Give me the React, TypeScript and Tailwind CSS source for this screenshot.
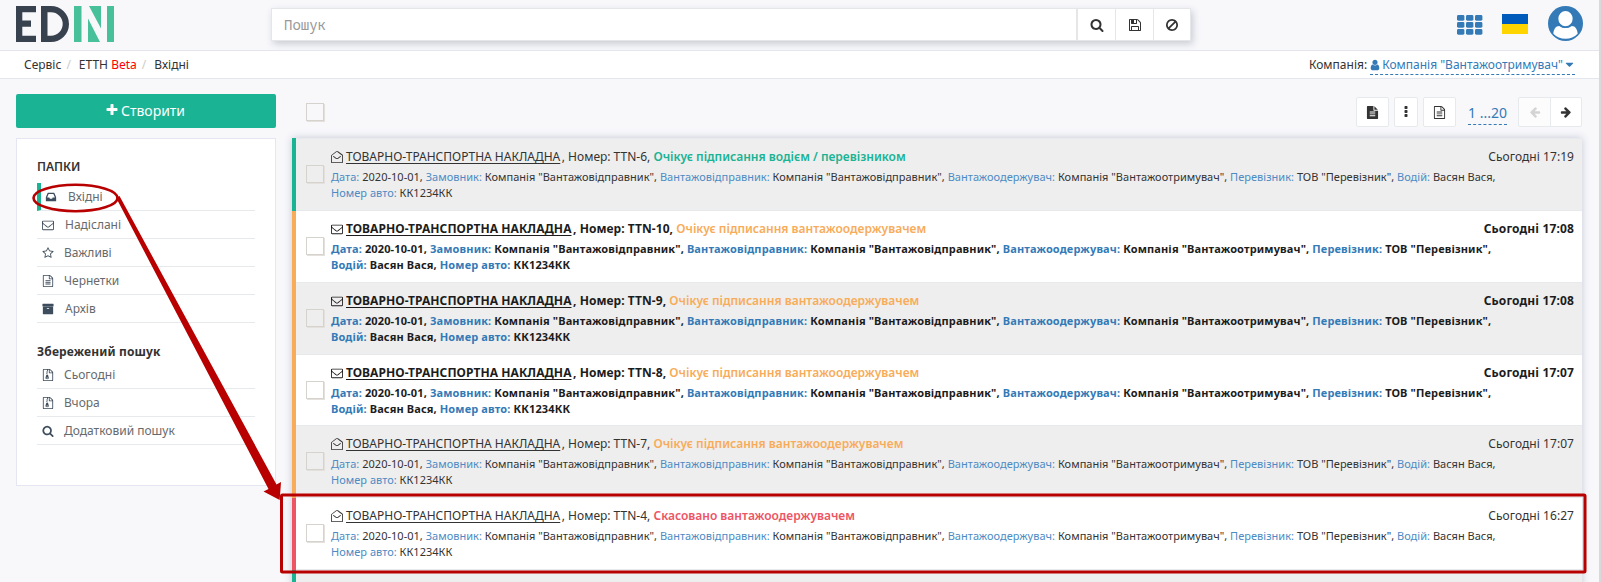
import React from "react";

const P = {
  search:
    "M1216 832q0-185-131.5-316.5t-316.5-131.5-316.5 131.5-131.5 316.5 131.5 316.5 316.5 131.5 316.5-131.5 131.5-316.5zm512 832q0 52-38 90t-90 38q-54 0-90-38l-343-342q-179 124-399 124-143 0-273.5-55.5t-225-150-150-225-55.5-273.5 55.5-273.5 150-225 225-150 273.5-55.5 273.5 55.5 225 150 150 225 55.5 273.5q0 220-124 399l343 343q37 37 37 90z",
  ban: "M1440 893q0-161-87-295l-754 753q137 89 297 89 111 0 211.5-43.5t173.5-116.5 116-174.5 43-212.5zm-999 299l755-754q-135-91-300-91-148 0-273 73t-198 199-73 274q0 162 89 299zm1223-299q0 157-61 300t-163.5 246-245 164-298.5 61-298.5-61-245-164-163.5-246-61-300 61-299.5 163.5-245.5 245-164 298.5-61 298.5 61 245 164 163.5 245.5 61 299.5z",
  floppy:
    "M512 1536h768v-384h-768v384zm896 0h128v-896q0-14-10-38.5t-20-34.5l-281-281q-10-10-34-20t-39-10v416q0 40-28 68t-68 28h-576q-40 0-68-28t-28-68v-416h-128v1280h128v-416q0-40 28-68t68-28h832q40 0 68 28t28 68v416zm-384-928v-320q0-13-9.5-22.5t-22.5-9.5h-192q-13 0-22.5 9.5t-9.5 22.5v320q0 13 9.5 22.5t22.5 9.5h192q13 0 22.5-9.5t9.5-22.5zm640 32v928q0 40-28 68t-68 28h-1344q-40 0-68-28t-28-68v-1344q0-40 28-68t68-28h928q40 0 88 20t76 48l280 280q28 28 48 76t20 88z",
  fileO:
    "M1596 380q28 28 48 76t20 88v1152q0 40-28 68t-68 28h-1344q-40 0-68-28t-28-68v-1600q0-40 28-68t68-28h896q40 0 88 20t76 48zm-444-244v376h376q-10-29-22-41l-313-313q-12-12-41-22zm384 1528v-1024h-416q-40 0-68-28t-28-68v-416h-768v1536h1280zm-1024-864q0-14 9-23t23-9h704q14 0 23 9t9 23v64q0 14-9 23t-23 9h-704q-14 0-23-9t-9-23v-64zm736 224q14 0 23 9t9 23v64q0 14-9 23t-23 9h-704q-14 0-23-9t-9-23v-64q0-14 9-23t23-9h704zm0 256q14 0 23 9t9 23v64q0 14-9 23t-23 9h-704q-14 0-23-9t-9-23v-64q0-14 9-23t23-9h704z",
  file: "M1596 476q14 14 28 36h-472v-472q22 14 36 28zm-476 164h544v1056q0 40-28 68t-68 28h-1344q-40 0-68-28t-28-68v-1600q0-40 28-68t68-28h800v544q0 40 28 68t68 28zm160 736v-64q0-14-9-23t-23-9h-704q-14 0-23 9t-9 23v64q0 14 9 23t23 9h704q14 0 23-9t9-23zm0-256v-64q0-14-9-23t-23-9h-704q-14 0-23 9t-9 23v64q0 14 9 23t23 9h704q14 0 23-9t9-23zm0-256v-64q0-14-9-23t-23-9h-704q-14 0-23 9t-9 23v64q0 14 9 23t23 9h704q14 0 23-9t9-23z",
  zip: "M1596 380q28 28 48 76t20 88v1152q0 40-28 68t-68 28h-1344q-40 0-68-28t-28-68v-1600q0-40 28-68t68-28h896q40 0 88 20t76 48zm-444-244v376h376q-10-29-22-41l-313-313q-12-12-41-22zm384 1528v-1024h-416q-40 0-68-28t-28-68v-416h-128v128h-128v-128h-512v1536h1280zM768 256v128h128v-128zm-128 128v128h128v-128zm128 128v128h128v-128zm-128 128v128h128v-128zm128 128v128h-128l-110 360q-14 50-14 72 0 90 72 141t180 51 180-51 72-141q0-22-14-72l-88-314q-5-18-19-32t-35-14h-32v-128zm0 512q53 0 90.500 19t37.500 45-37.500 45-90.500 19-90.500-19-37.500-45 37.500-45 90.500-19z",
  plus: "M1600 736v192q0 40-28 68t-68 28h-416v416q0 40-28 68t-68 28h-192q-40 0-68-28t-28-68v-416h-416q-40 0-68-28t-28-68v-192q0-40 28-68t68-28h416v-416q0-40 28-68t68-28h192q40 0 68 28t28 68v416h416q40 0 68 28t28 68z",
  envelope:
    "M1664 1504v-768q-32 36-69 66-268 206-426 338-51 43-83 67t-86.500 48.500-102.500 24.500h-2q-48 0-102.500-24.500t-86.500-48.500-83-67q-158-132-426-338-37-30-69-66v768q0 13 9.500 22.500t22.500 9.500h1472q13 0 22.500-9.500t9.500-22.500zm0-1051v-24.500l-.5-13-3-12.500-5.500-9-9-7.500-14-2.500h-1472q-13 0-22.500 9.500t-9.500 22.500q0 168 147 284 193 152 401 317 6 5 35 29.500t46 37.500 44.500 31.500 50.500 27.500 43 9h2q20 0 43-9t50.500-27.500 44.500-31.500 46-37.500 35-29.500q208-165 401-317 54-43 100.500-115.500t46.500-131.500zm128-37v1088q0 66-47 113t-113 47h-1472q-66 0-113-47t-47-113v-1088q0-66 47-113t113-47h1472q66 0 113 47t47 113z",
  envelopeOpen:
    "M160 1792q-66 0-113-47t-47-113v-932q0-53 43-84q95-78 505-390q42-32 76-59q67-52 122-85t105-42q45-9 45-9q45 0 95 9t105 42q55 33 122 85q34 27 76 59q410 312 452 344q46 36 46 90v972q0 66-47 113t-113 47zm0-128h1472q13 0 22.500-9.500t9.500-22.500v-930q0-14-12-24q-90-72-472-360q-46-36-82-66q-54-44-94-70t-72-34q-36-8-36-8q-36 0-68 14t-72 40q-40 26-94 70q-36 30-82 66q-382 288-440 344q-12 10-12 28v930q0 13 9.500 22.500t22.500 9.500zM298 838l60-72q10-12 24-12t26 8q160 122 240 188q52 42 92 68t66 36q54 22 90 22q48 0 90-22q26-10 66-36t92-68q80-66 240-188q12-8 26-8t24 12l44 56q14 20-8 40q-178 140-254 198q-50 40-94 68t-82 44q-78 34-144 34q-76 0-144-34q-38-16-82-44t-94-68q-76-58-260-198q-22-12-18-24z",
  inbox:
    "M1151 960h316q-1-3-2.500-8.500t-2.500-7.500l-212-496h-708l-212 496q-1 3-2.500 8.500t-2.500 7.500h316l95 192h320zm513 30v482q0 26-19 45t-45 19h-1408q-26 0-45-19t-19-45v-482q0-62 25-123l238-552q10-25 36.500-42t52.500-17h832q26 0 52.500 17t36.500 42l238 552q25 61 25 123z",
  star: "M1201 1004l306-297-422-62-189-382-189 382-422 62 306 297-73 421 378-199 377 199zm527-357q0 22-26 48l-363 354 86 500q1 7 1 20 0 50-41 50-19 0-40-12l-449-236-449 236q-22 12-40 12-21 0-31.500-14.500t-10.500-35.500q0-6 2-20l86-500-364-354q-25-27-25-48 0-37 56-46l502-73 225-455q19-41 49-41t49 41l225 455 502 73q56 9 56 46z",
  archive:
    "M1088 832q0-26-19-45t-45-19h-256q-26 0-45 19t-19 45 19 45 45 19h256q26 0 45-19t19-45zm576-192v960q0 26-19 45t-45 19h-1408q-26 0-45-19t-19-45v-960q0-26 19-45t45-19h1408q26 0 45 19t19 45zm64-448v256q0 26-19 45t-45 19h-1536q-26 0-45-19t-19-45v-256q0-26 19-45t45-19h1536q26 0 45 19t19 45z",
  arrow:
    "M1664 896v128q0 53-32.500 90.500t-84.500 37.500h-704l293 294q38 36 38 90t-38 90l-75 76q-37 37-90 37-52 0-91-37l-651-652q-37-37-37-90 0-52 37-91l651-650q38-38 91-38 52 0 90 38l75 74q38 38 38 91t-38 91l-293 293h704q52 0 84.500 37.500t32.500 90.500z",
  user: "M1536 1399q0 109-62.500 187t-150.500 78h-854q-88 0-150.500-78t-62.500-187q0-85 8.500-160.500t31.500-152 58.500-131 94-89 134.500-34.500q131 128 313 128t313-128q76 0 134.500 34.500t94 89 58.500 131 31.500 152 8.500 160.500zm-256-887q0 159-112.500 271.500t-271.500 112.500-271.500-112.500-112.500-271.500 112.500-271.500 271.500-112.500 271.500 112.500 112.500 271.500z",
  dots: "M1088 1248v192q0 40-28 68t-68 28h-192q-40 0-68-28t-28-68v-192q0-40 28-68t68-28h192q40 0 68 28t28 68zm0-512v192q0 40-28 68t-68 28h-192q-40 0-68-28t-28-68v-192q0-40 28-68t68-28h192q40 0 68 28t28 68zm0-512v192q0 40-28 68t-68 28h-192q-40 0-68-28t-28-68v-192q0-40 28-68t68-28h192q40 0 68 28t28 68z",
  caret: "M1408 704q0 26-19 45l-448 448q-19 19-45 19t-45-19l-448-448q-19-19-19-45t19-45 45-19h896q26 0 45 19t19 45z",
};

function Icon({ name, className = "size-3.5" }: { name: keyof typeof P; className?: string }) {
  return (
    <svg viewBox="0 0 1792 1792" className={`shrink-0 fill-current ${className}`}>
      <path d={P[name]} />
    </svg>
  );
}

function Logo() {
  return (
    <svg viewBox="0 0 98 36" className="h-9 w-[98px]">
      <g fill="#38424e">
        <path d="M0 0h20v6.300H6.300v8.200H15v6.200H6.300v9H20V36H0z" />
        <path fillRule="evenodd" d="M25 0h10a18 18 0 0 1 0 36H25zM31.500 6.300v23.400H35a11.700 11.700 0 0 0 0-23.400z" />
      </g>
      <g fill="#48c09a">
        <path d="M58 0h7.500v36H58zM91 0h7v36h-7zM72 12.500 84 36H72zM73 0h12v22.500z" />
      </g>
    </svg>
  );
}

function Th() {
  return (
    <svg viewBox="0 0 26 20" className="h-5 w-[26px]" fill="#337ab7">
      {[0, 7, 14].map((y) => [0, 9, 18].map((x) => <rect key={`${x}-${y}`} x={x} y={y} width="7.400" height="5.700" rx="1.400" />))}
    </svg>
  );
}

function Avatar() {
  return (
    <svg viewBox="0 0 36 36" className="size-[35px]">
      <circle cx="18" cy="18" r="18" fill="#337ab7" />
      <path d="M5.500 28.500C5.700 24 8 20.500 11.500 20.500Q18 25 24.500 20.500C28 20.500 30.300 24 30.500 28.500Q25.500 33.700 18 33.700T5.500 28.500z" fill="#fff" />
      <ellipse cx="18" cy="13" rx="8.200" ry="8.700" fill="#fff" stroke="#337ab7" strokeWidth="1.700" />
    </svg>
  );
}

type Row = {
  no: string;
  status: string;
  time: string;
  bar: string;
  color: string;
  unread?: boolean;
  bg: string;
  height: string;
};

const WAIT = "Очікує підписання вантажоодержувачем";
const rows: Row[] = [
  { no: "6", status: "Очікує підписання водієм / перевізником", time: "17:19", bar: "bg-[#1ab394]", color: "text-[#1ab394]", bg: "bg-[#eee]", height: "h-[72px]" },
  { no: "10", status: WAIT, time: "17:08", bar: "bg-[#f8ac59]", color: "text-[#f8ac59]", unread: true, bg: "bg-white", height: "h-[72px]" },
  { no: "9", status: WAIT, time: "17:08", bar: "bg-[#f8ac59]", color: "text-[#f8ac59]", unread: true, bg: "bg-[#eee]", height: "h-[72px]" },
  { no: "8", status: WAIT, time: "17:07", bar: "bg-[#f8ac59]", color: "text-[#f8ac59]", unread: true, bg: "bg-white", height: "h-[71px]" },
  { no: "7", status: WAIT, time: "17:07", bar: "bg-[#f8ac59]", color: "text-[#f8ac59]", bg: "bg-[#eee]", height: "h-[72px]" },
  { no: "4", status: "Скасовано вантажоодержувачем", time: "16:27", bar: "bg-[#ed5565]", color: "text-[#ed5565]", bg: "bg-white", height: "h-[72px]" },
];

const fields: [string, string][] = [
  ["Дата", "2020-10-01"],
  ["Замовник", 'Компанія "Вантажовідправник"'],
  ["Вантажовідправник", 'Компанія "Вантажовідправник"'],
  ["Вантажоодержувач", 'Компанія "Вантажоотримувач"'],
  ["Перевізник", 'ТОВ "Перевізник"'],
  ["Водій", "Васян Вася"],
  ["Номер авто", "КК1234КК"],
];

function Checkbox() {
  return <span className="block size-[18px] shrink-0 border border-[#d6d3cf] shadow-[1px_1px_0_#e4e0dc]" />;
}

function DocRow({ row }: { row: Row }) {
  return (
    <div className={`flex ${row.height}`}>
      <div className={`w-1 shrink-0 ${row.bar}`} />
      <div className={`flex min-w-0 flex-1 border-b border-[#e7eaec] ${row.bg} ${row.unread ? "font-bold text-[#1c1c1c]" : "text-[#333]"}`}>
        <div className="w-[35px] shrink-0 pt-[26px] pl-[10px]">
          <Checkbox />
        </div>
        <div className="min-w-0 flex-1 pt-[9px]">
          <div className={`flex h-[18px] items-center pr-2 text-[12px] leading-[18px] ${row.unread ? "tracking-[0.05px]" : ""}`}>
            <Icon name={row.unread ? "envelope" : "envelopeOpen"} className="mr-[3px] size-3" />
            <span className="underline underline-offset-2">ТОВАРНО-ТРАНСПОРТНА НАКЛАДНА</span>
            <span className="ml-[1.5px] whitespace-pre">, Номер: TTN-{row.no}, </span>
            <span className={`font-semibold tracking-normal ${row.color}`}>{row.status}</span>
            <span className={`ml-auto ${row.unread ? "tracking-[0.14px]" : "tracking-[0.05px]"}`}>Сьогодні {row.time}</span>
          </div>
          <div className={`w-[1190px] pt-[2.7px] text-[11px] leading-4 ${row.unread ? "tracking-[0.137px]" : "tracking-[0.019px]"}`}>
            {fields.map(([k, v], i) => (
              <React.Fragment key={k}>
                <span className={row.unread ? "text-[#337ab7]" : "text-[#4c8bc4]"}>{k}:</span> {v}
                {i < fields.length - 1 ? ", " : ""}
              </React.Fragment>
            ))}
          </div>
        </div>
      </div>
    </div>
  );
}

function Item({ icon, label, active, gap = "gap-[10px]" }: { icon: keyof typeof P; label: string; active?: boolean; gap?: string }) {
  return (
    <li className={`flex h-7 items-center border-b border-[#e7eaec] text-[#676a6c] ${active ? "border-l-4 border-l-[#1ab394] pl-1" : "pl-[5px]"} ${gap}`}>
      <Icon name={icon} className="size-3 text-[#3d4d5d]" />
      <span>{label}</span>
    </li>
  );
}

export default function App() {
  return (
    <div className="relative flex h-[582px] w-full flex-col overflow-hidden border-r-2 border-[#d9d9da] bg-[#f8f8fb] font-['Noto_Sans',sans-serif] text-[12px] text-[#333]">
      <header className="flex h-[50px] shrink-0 items-start pr-4 pl-4">
        <div className="mt-1.5 w-[255px]">
          <Logo />
        </div>
        <div className="mt-2 flex h-[33px] w-[920px] border border-[#e5e6e7] bg-white shadow-[2px_3px_7px_#c9ccd4]">
          <div className="flex flex-1 items-center px-3 pb-px font-['Noto_Sans_Mono','DejaVu_Sans_Mono',monospace] text-[14px] text-[#999]">Пошук</div>
          <div className="flex w-[39px] items-center justify-center border-l-2 border-[#e5e6e7]"><Icon name="search" className="size-[14px]" /></div>
          <div className="flex w-[38px] items-center justify-center border-l border-[#e5e6e7]"><Icon name="floppy" className="size-[14px]" /></div>
          <div className="flex w-[37px] items-center justify-center border-l border-[#e5e6e7]"><Icon name="ban" className="size-[14px]" /></div>
        </div>
        <div className="ml-auto flex">
          <div className="mt-[15px] mr-[19px]"><Th /></div>
          <div className="mt-3.5 mr-5 h-5 w-[26px]">
            <div className="h-2.5 bg-[#005bbb]" />
            <div className="h-2.5 bg-[#ffd500]" />
          </div>
          <div className="mt-1.5"><Avatar /></div>
        </div>
      </header>

      <nav className="flex h-[29px] shrink-0 items-center border-y border-[#e4e6ee] bg-white pr-6 pl-6">
        <span>Сервіс</span>
        <span className="mr-2 ml-[5px] text-[#ccc]">/</span>
        <span>ЕТТН <span className="text-[#f00]">Beta</span></span>
        <span className="mr-2 ml-[5px] text-[#ccc]">/</span>
        <span>Вхідні</span>
        <span className="mr-[3px] ml-auto">Компанія:</span>
        <span className="mt-px flex h-[19px] items-center border-b border-dashed border-[#337ab7] text-[#337ab7]">
          <Icon name="user" className="mr-px -ml-px size-[12px]" />
          Компанія "Вантажоотримувач"
          <Icon name="caret" className="-mr-px size-[13px]" />
        </span>
      </nav>

      <main className="flex min-h-0 flex-1">
        <aside className="w-[276px] shrink-0 pt-[15px] pl-4">
          <button className="flex h-[34px] w-full items-center justify-center gap-0.5 rounded-[2px] bg-[#1ab394] pr-0.5 pb-0.5 text-[14px] text-white">
            <Icon name="plus" className="size-[14px]" />
            Створити
          </button>
          <div className="mt-[10px] h-[348px] border border-[#e4e6f2] bg-white px-5 pt-[15px]">
            <h5 className="mb-[3px] flex h-[26px] items-center font-semibold">ПАПКИ</h5>
            <ul>
              <Item icon="inbox" label="Вхідні" active gap="gap-[11px]" />
              <Item icon="envelope" label="Надіслані" gap="gap-[11px]" />
              <Item icon="star" label="Важливі" />
              <Item icon="fileO" label="Чернетки" />
              <Item icon="archive" label="Архів" gap="gap-[11px]" />
            </ul>
            <h5 className="mt-[19px] flex h-[19px] items-center font-bold tracking-[0.15px]">Збережений пошук</h5>
            <ul>
              <Item icon="zip" label="Сьогодні" />
              <Item icon="zip" label="Вчора" />
              <Item icon="search" label="Додатковий пошук" />
            </ul>
          </div>
        </aside>

        <section className="ml-4 flex w-[1290px] shrink-0 flex-col">
          <div className="flex h-[59px] shrink-0 items-start pt-[18px]">
            <div className="mt-[6px] ml-[14px]"><Checkbox /></div>
            <div className="ml-auto flex items-center">
              <span className="flex h-[30px] w-[33px] items-center justify-center rounded-[2px] border border-[#e7eaec] bg-white"><Icon name="file" className="size-[13px]" /></span>
              <span className="ml-[5px] flex h-[30px] w-[24px] items-center justify-center rounded-[2px] border border-[#e7eaec] bg-white"><Icon name="dots" className="size-[14px]" /></span>
              <span className="ml-[5px] flex h-[30px] w-[33px] items-center justify-center rounded-[2px] border border-[#e7eaec] bg-white"><Icon name="fileO" className="size-[13px]" /></span>
              <span className="mt-0.5 mr-[11px] ml-3 flex h-[23px] items-center border-b border-dashed border-[#337ab7] text-[14px] text-[#337ab7]">1 ...20</span>
              <span className="flex h-[30px] w-[33px] items-center justify-center rounded-l-[2px] border border-[#e7eaec] bg-[#fcfcfd] text-[#d4d4d4]"><Icon name="arrow" className="size-[12px]" /></span>
              <span className="-ml-px flex h-[30px] w-[32px] items-center justify-center rounded-r-[2px] border border-[#e7eaec] bg-white"><Icon name="arrow" className="size-[12px] -scale-x-100" /></span>
            </div>
          </div>
          <div className="shadow-[0_0_8px_#c5c9d6]">
            <div className="flex h-px"><div className="w-1 bg-[#1ab394]" /><div className="flex-1 bg-[#e7eaec]" /></div>
            {rows.map((r) => <DocRow key={r.no} row={r} />)}
            <div className="flex h-10"><div className="w-1 bg-[#1ab394]" /><div className="flex-1 bg-[#eee]" /></div>
          </div>
        </section>
      </main>

      <svg className="pointer-events-none absolute top-0 left-0" width="1601" height="582">
        <ellipse cx="75.500" cy="198" rx="42" ry="13.200" fill="none" stroke="#b80000" strokeWidth="2.600" />
        <path d="M116 197.500L119.500 196L276.500 484.500L281 482L279.700 500L263.500 491.500L268.500 489z" fill="#b80000" />
        <rect x="281.500" y="495" width="1303.500" height="77" rx="1" fill="none" stroke="#b80000" strokeWidth="3" />
      </svg>
    </div>
  );
}
